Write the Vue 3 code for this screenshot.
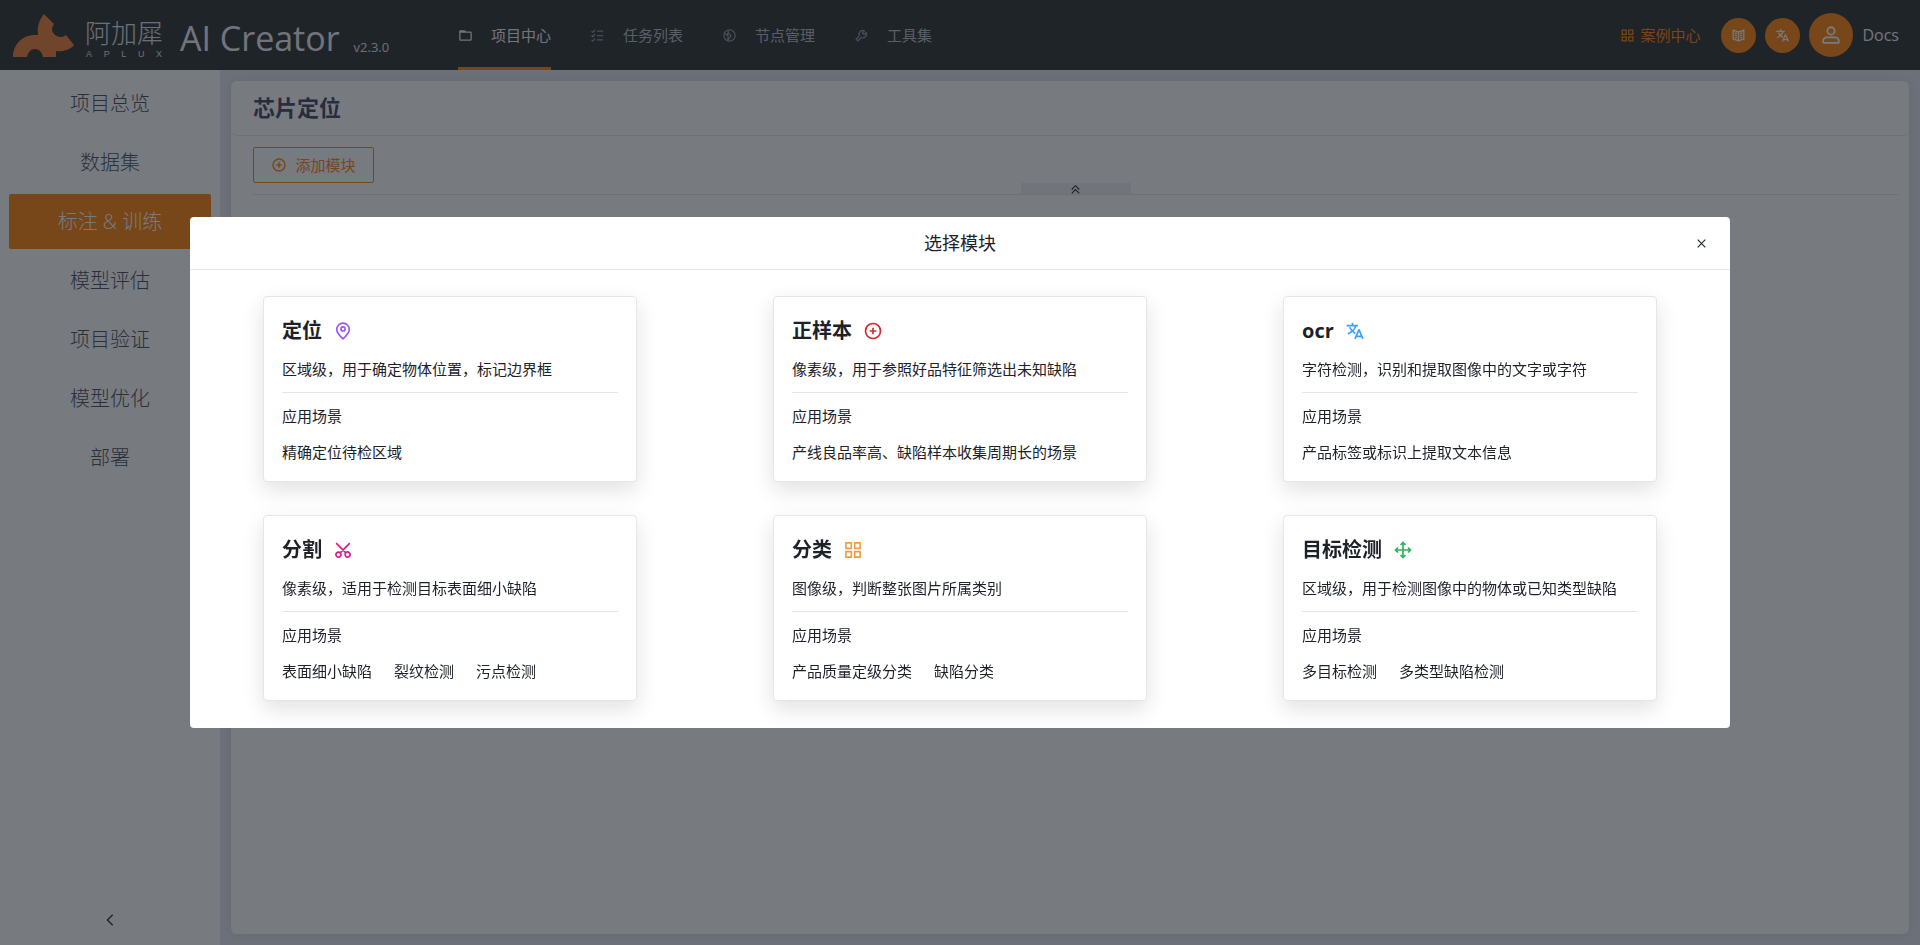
<script setup>
const icons = {
  folder: 'M6 13h18l-2.5-3.6a1 1 0 0 0-.9-.4H7a1 1 0 0 0-1 1v3Zm0 0h34a2 2 0 0 1 2 2v22a2 2 0 0 1-2 2H8a2 2 0 0 1-2-2V13Z',
  list: 'M22 10h20M22 24h20M22 38h20M5 10l4 4 7-8M5 24l4 4 7-8M5 38l4 4 7-8',
  globe: 'M15 21.5 6.704 19M15 21.5l4.683 5.152a1 1 0 0 1 .25.814L18 40.976l10.918-16.117a1 1 0 0 0-.298-1.409L21.5 19 15 21.5Zm0 0 6.062-6.995a1 1 0 0 0 .138-1.103L18 7.024M42 24c0 9.941-8.059 18-18 18S6 33.941 6 24 14.059 6 24 6s18 8.059 18 18Z',
  tool: 'M19.994 11.035c3.66-3.659 9.094-4.46 13.531-2.405a.1.1 0 0 1 .028.16l-6.488 6.488a1 1 0 0 0 0 1.414l4.243 4.243a1 1 0 0 0 1.414 0l6.488-6.488a.1.1 0 0 1 .16.028c2.056 4.437 1.254 9.872-2.405 13.53-3.695 3.696-9.2 4.477-13.66 2.347L12.923 40.733a1 1 0 0 1-1.414 0L7.266 36.49a1 1 0 0 1 0-1.414l10.382-10.382c-2.13-4.46-1.349-9.965 2.346-13.66Z',
  apps: 'M7 7h13v13H7V7ZM28 7h13v13H28V7ZM7 28h13v13H7V28ZM28 28h13v13H28V28Z',
  book: 'M24 13 7 7v28l17 6 17-6V7l-17 6Zm0 0v27.5M29 18l7-2.5M29 25l7-2.5M29 32l7-2.5M19 18l-7-2.5m7 9.5-7-2.5m7 9.5-7-2.5',
  translate: 'M4 11h27M18 4v7M26 11c-2 8-9 15-19 20M11 15c3 6 8 11 14 15M24 43l9-21h1l9 21M27 37h13',
  user: 'M7 37a8 8 0 0 1 8-8h18a8 8 0 0 1 8 8v3a1 1 0 0 1-1 1H8a1 1 0 0 1-1-1v-3ZM32 15a8 8 0 1 1-16 0 8 8 0 0 1 16 0Z',
  plus: 'M24 16v16M16 24h16M42 24c0 9.941-8.059 18-18 18S6 33.941 6 24 14.059 6 24 6s18 8.059 18 18Z',
  location: 'M29 19a5 5 0 1 1-10 0 5 5 0 0 1 10 0ZM39 20.405C39 28.914 24 43 24 43S9 28.914 9 20.405C9 11.897 15.716 5 24 5s15 6.897 15 15.405Z',
  scissor: 'm40.293 7.707-23.05 23.05m0 0a6 6 0 1 0-8.485 8.485 6 6 0 0 0 8.485-8.485Zm13.514 0a6 6 0 1 0 8.485 8.485 6 6 0 0 0-8.485-8.485Zm0 0L7.707 7.707',
  drag: 'M7 24h34M24 7v34M30 12l-6-6-6 6M36 30l6-6-6-6M12 30l-6-6 6-6M18 36l6 6 6-6',
  up: 'm10 24 14-14 14 14M10 38l14-14 14 14',
  left: 'M32 8.4 16.4 24 32 39.5',
  close: 'M9.9 9.9l28.2 28.2M38.1 9.9 9.9 38.1',
}
const nav = [
  { text: '项目中心', icon: 'folder', active: true },
  { text: '任务列表', icon: 'list' },
  { text: '节点管理', icon: 'globe' },
  { text: '工具集', icon: 'tool' },
]
const side = ['项目总览', '数据集', '标注 & 训练', '模型评估', '项目验证', '模型优化', '部署']
const activeSide = 2
const modules = [
  { name: '定位', icon: 'location', tone: 'purple', desc: '区域级，用于确定物体位置，标记边界框', scenes: ['精确定位待检区域'] },
  { name: '正样本', icon: 'plus', tone: 'red', desc: '像素级，用于参照好品特征筛选出未知缺陷', scenes: ['产线良品率高、缺陷样本收集周期长的场景'] },
  { name: 'ocr', icon: 'translate', tone: 'blue', desc: '字符检测，识别和提取图像中的文字或字符', scenes: ['产品标签或标识上提取文本信息'] },
  { name: '分割', icon: 'scissor', tone: 'magenta', desc: '像素级，适用于检测目标表面细小缺陷', scenes: ['表面细小缺陷', '裂纹检测', '污点检测'] },
  { name: '分类', icon: 'apps', tone: 'amber', desc: '图像级，判断整张图片所属类别', scenes: ['产品质量定级分类', '缺陷分类'] },
  { name: '目标检测', icon: 'drag', tone: 'green', desc: '区域级，用于检测图像中的物体或已知类型缺陷', scenes: ['多目标检测', '多类型缺陷检测'] },
]
</script>

<template>
  <div class="app">
    <header class="header">
      <div class="brand">
        <svg class="rhino" viewBox="0 0 61 43" aria-hidden="true">
          <path d="M0 43C0 31 9 21 22 21H25C24 13 26 6 31 0L41 10C40 12 39 13 39 15C39 19 43 23 48 23C50 23 51 22 53 21L61 31C57 36 50 38 43 37V43H30C29 38 26 35 22 35C18 35 15 38 14 43Z" />
        </svg>
        <div class="company">
          <span class="company-cn">阿加犀</span>
          <span class="company-en"><span v-for="c in 'APLUX'" :key="c">{{ c }}</span></span>
        </div>
        <span class="product">AI Creator</span>
        <span class="version">v2.3.0</span>
      </div>
      <nav class="nav">
        <a v-for="n in nav" :key="n.text" href="#" class="nav-item" :class="{ active: n.active }">
          <svg class="icon s15" viewBox="0 0 48 48"><path :d="icons[n.icon]" /></svg>
          <span>{{ n.text }}</span>
        </a>
      </nav>
      <div class="tools">
        <a href="#" class="cases">
          <svg class="icon s15" viewBox="0 0 48 48"><path :d="icons.apps" /></svg>
          <span>案例中心</span>
        </a>
        <button type="button" class="round" aria-label="文档">
          <svg class="icon s15" viewBox="0 0 48 48"><path :d="icons.book" /></svg>
        </button>
        <button type="button" class="round" aria-label="语言">
          <svg class="icon s15" viewBox="0 0 48 48"><path :d="icons.translate" /></svg>
        </button>
        <button type="button" class="round large" aria-label="用户">
          <svg class="icon s22" viewBox="0 0 48 48"><path :d="icons.user" /></svg>
        </button>
        <a href="#" class="docs">Docs</a>
      </div>
    </header>

    <div class="body">
      <aside class="side">
        <nav class="side-nav">
          <a v-for="(s, i) in side" :key="s" href="#" class="side-item" :class="{ active: i === activeSide }">{{ s }}</a>
        </nav>
        <button type="button" class="fold" aria-label="收起">
          <svg class="icon s16" viewBox="0 0 48 48"><path :d="icons.left" /></svg>
        </button>
      </aside>
      <main class="main">
        <section class="panel">
          <h1 class="panel-title">芯片定位</h1>
          <div class="toolbar">
            <button type="button" class="add">
              <svg class="icon s16" viewBox="0 0 48 48"><path :d="icons.plus" /></svg>
              <span>添加模块</span>
            </button>
            <button type="button" class="tab" aria-label="折叠">
              <svg class="icon s13" viewBox="0 0 48 48"><path :d="icons.up" /></svg>
            </button>
          </div>
        </section>
      </main>
    </div>

    <div class="mask">
      <div class="modal" role="dialog" aria-modal="true" aria-labelledby="modal-title">
        <div class="modal-head">
          <h2 id="modal-title">选择模块</h2>
          <button type="button" class="close" aria-label="关闭">
            <svg class="icon s13" viewBox="0 0 48 48"><path :d="icons.close" /></svg>
          </button>
        </div>
        <div class="modal-body">
          <button v-for="m in modules" :key="m.name" type="button" class="card">
            <span class="card-title">
              <span>{{ m.name }}</span>
              <svg class="icon s20" :class="m.tone" viewBox="0 0 48 48"><path :d="icons[m.icon]" /></svg>
            </span>
            <span class="desc">{{ m.desc }}</span>
            <span class="label">应用场景</span>
            <span class="scenes"><span v-for="s in m.scenes" :key="s">{{ s }}</span></span>
          </button>
        </div>
      </div>
    </div>
  </div>
</template>

<style>
body {
  margin: 0;
}
</style>

<style scoped>
.app {
  display: flex;
  flex-direction: column;
  min-height: 100vh;
  background: #e5e7f0;
  color: #1d2129;
  font-family: "Open Sans", "Noto Sans CJK SC", sans-serif;
  font-size: 15px;
  line-height: 24px;
}
.app * {
  box-sizing: border-box;
}
a {
  color: inherit;
  text-decoration: none;
}
button {
  margin: 0;
  padding: 0;
  border: 0;
  background: none;
  color: inherit;
  font: inherit;
  cursor: pointer;
}
.icon {
  display: block;
  flex: none;
  fill: none;
  stroke: currentColor;
  stroke-width: 4;
}
.s13 { width: 13px; height: 13px; }
.s15 { width: 15px; height: 15px; }
.s16 { width: 16px; height: 16px; }
.s20 { width: 20px; height: 20px; }
.s22 { width: 22px; height: 22px; }

.header {
  display: flex;
  height: 70px;
  background: #25282a;
  color: #fff;
}
.brand {
  display: flex;
  align-items: flex-end;
  width: 458px;
  padding: 0 0 13px 13px;
}
.rhino {
  width: 61px;
  height: 43px;
  fill: #ed7a2f;
}
.company {
  display: flex;
  flex-direction: column;
  width: 78px;
  margin: 0 0 -2px 11px;
  color: #e0e3e8;
  font-family: "Liberation Sans", "Noto Sans CJK SC", sans-serif;
}
.company-cn {
  font-size: 26px;
  font-weight: 300;
  line-height: 30px;
}
.company-en {
  display: flex;
  justify-content: space-between;
  padding: 0 1px;
  font-size: 9px;
  line-height: 10px;
}
.product {
  margin-left: 17px;
  color: #f0f2f5;
  font-size: 34px;
  line-height: 38px;
  white-space: nowrap;
}
.version {
  margin-left: 14px;
  color: #e0e3e8;
  font-size: 13px;
  line-height: 20px;
}
.nav {
  display: flex;
  gap: 39px;
}
.nav-item {
  display: flex;
  align-items: center;
  gap: 18px;
  border-top: 3px solid transparent;
  border-bottom: 3px solid transparent;
  color: #b4bac4;
}
.nav-item .icon {
  color: #86909c;
}
.nav-item.active {
  border-bottom-color: #ff7d00;
  color: #f2f3f5;
}
.nav-item.active .icon {
  color: #f2f3f5;
}
.tools {
  display: flex;
  align-items: center;
  gap: 9px;
  margin-left: auto;
  padding-right: 21px;
}
.cases {
  display: flex;
  align-items: center;
  gap: 5px;
  margin-right: 12px;
  color: #ff7d00;
}
.round {
  display: grid;
  place-items: center;
  width: 35px;
  height: 35px;
  border-radius: 50%;
  background: #ff7d00;
  color: #fff;
}
.round.large {
  width: 44px;
  height: 44px;
}
.docs {
  color: #f0f2f5;
  font-size: 16px;
}

.body {
  display: flex;
  flex: 1;
}
.side {
  display: flex;
  flex-direction: column;
  justify-content: space-between;
  width: 220px;
  padding: 6px 9px 17px;
  background: #fff;
}
.side-nav {
  display: flex;
  flex-direction: column;
  gap: 4px;
}
.side-item {
  border-radius: 2px;
  color: #3c4656;
  font-size: 20px;
  font-weight: 300;
  line-height: 55px;
  text-align: center;
}
.side-item.active {
  background: #ff7d00;
  color: #fff;
}
.fold {
  align-self: center;
}
.main {
  display: flex;
  flex: 1;
  padding: 11px;
}
.panel {
  flex: 1;
  border-radius: 6px;
  background: #fff;
  box-shadow: 0 0 11px rgba(60, 60, 90, 0.12);
}
.panel-title {
  margin: 0;
  padding: 0 22px 2px;
  border-bottom: 1px solid #e5e6eb;
  border-radius: 6px;
  color: #3b3c60;
  font-size: 22px;
  font-weight: 700;
  line-height: 52px;
}
.toolbar {
  position: relative;
  margin: 0 11px 0 22px;
  padding: 11px 0;
  border-bottom: 1px solid #e5e6eb;
}
.add {
  display: flex;
  align-items: center;
  justify-content: center;
  gap: 8px;
  width: 121px;
  height: 36px;
  border: 1px solid #ff7d00;
  border-radius: 2px;
  color: #ff7d00;
}
.tab {
  position: absolute;
  bottom: 0;
  left: 50%;
  display: grid;
  place-items: center;
  width: 110px;
  height: 11px;
  margin-left: -55px;
  background: #eff1f6;
  color: #1d2129;
}

.mask {
  position: fixed;
  inset: 0;
  display: flex;
  align-items: center;
  justify-content: center;
  background: rgba(29, 33, 41, 0.6);
}
.modal {
  width: 1540px;
  max-width: 96%;
  border-radius: 4px;
  background: #fff;
}
.modal-head {
  display: grid;
  grid-template-columns: 1fr auto 1fr;
  align-items: center;
  height: 53px;
  padding: 0 22px;
  border-bottom: 1px solid #e5e6eb;
}
.modal-head h2 {
  grid-column: 2;
  margin: 0;
  font-size: 18px;
  font-weight: 400;
}
.close {
  justify-self: end;
}
.modal-body {
  display: grid;
  grid-template-columns: repeat(3, 1fr);
  justify-items: center;
  gap: 33px 0;
  padding: 26px 5px 27px;
}
.card {
  display: flex;
  flex-direction: column;
  width: 374px;
  padding: 19px 18px 17px;
  border: 1px solid #e5e6eb;
  border-radius: 4px;
  background: #fff;
  box-shadow: 0 8px 22px rgba(0, 0, 0, 0.12);
  text-align: left;
}
.card-title {
  display: flex;
  align-items: center;
  gap: 11px;
  font-size: 20px;
  font-weight: 700;
  line-height: 30px;
}
.desc {
  margin-bottom: 11px;
  padding: 11px 0;
  border-bottom: 1px solid #e5e6eb;
}
.scenes {
  display: flex;
  gap: 22px;
  margin-top: 12px;
}
.purple { color: #9a55f5; }
.red { color: #cb2e2a; }
.blue { color: #3a9fff; }
.magenta { color: #d91e8b; }
.amber { color: #ee9f45; }
.green { color: #2fb157; }
</style>
